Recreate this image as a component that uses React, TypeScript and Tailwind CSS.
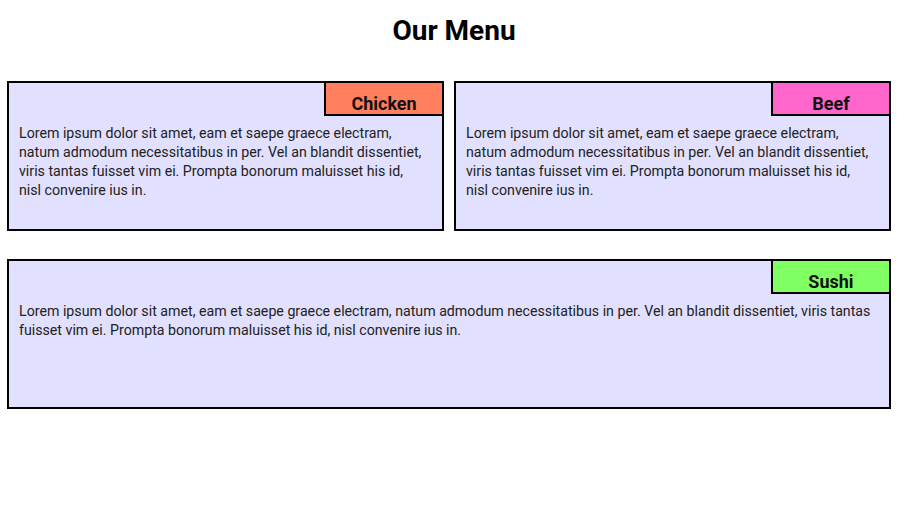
const LOREM =
  "Lorem ipsum dolor sit amet, eam et saepe graece electram, natum admodum necessitatibus in per. Vel an blandit dissentiet, viris tantas fuisset vim ei. Prompta bonorum maluisset his id, nisl convenire ius in.";

const ITEMS = [
  { name: "Chicken", color: "bg-[#ff7f5f]", wide: false },
  { name: "Beef", color: "bg-[#ff66cc]", wide: false },
  { name: "Sushi", color: "bg-[#80ff62]", wide: true },
];

export default function App() {
  return (
    <div className="w-[902px] min-h-[511px] bg-white font-['Roboto','Liberation_Sans',sans-serif]">
      <h1 className="pt-[14px] pl-[6px] text-center text-[28px] leading-[33px] font-bold text-black">
        Our Menu
      </h1>
      <div className="mt-[34px] ml-[7px] grid w-[884px] grid-cols-2 gap-x-[10px] gap-y-[28px]">
        {ITEMS.map((item) => (
          <MenuCard key={item.name} {...item} />
        ))}
      </div>
    </div>
  );
}

function MenuCard({ name, color, wide }: { name: string; color: string; wide: boolean }) {
  return (
    <section
      className={`flex h-[150px] flex-col border-2 border-black bg-[#e1e0fe] ${wide ? "col-span-2" : ""}`}
    >
      <div
        className={`-mt-[2px] -mr-[2px] flex h-[35px] w-[120px] items-end justify-center self-end border-2 border-black ${color}`}
      >
        <span className="text-[18px] leading-[21px] font-bold text-[#111]">{name}</span>
      </div>
      <p className="mt-[8px] pl-[10px] pr-[16px] text-[14.2px] leading-[19px] text-[#222]">{LOREM}</p>
    </section>
  );
}
